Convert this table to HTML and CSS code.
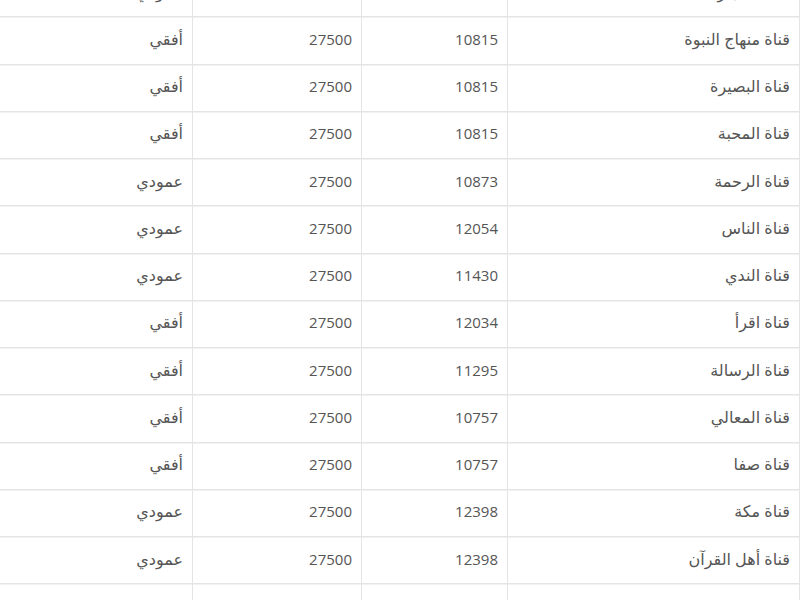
FILE: index.html
```html
<!DOCTYPE html>
<html lang="ar" dir="rtl">
<head>
<meta charset="utf-8">
<link rel="stylesheet" href="styles.css">
</head>
<body>
<div class="page">
<table class="channels">
<colgroup><col class="c-name"><col class="c-freq"><col class="c-sr"><col class="c-pol"></colgroup>
<tbody>
<tr><td class="ar">قناة الحجاز</td><td></td><td></td><td class="ar">عمودي</td></tr>
<tr><td class="ar">قناة منهاج النبوة</td><td>10815</td><td>27500</td><td class="ar">أفقي</td></tr>
<tr><td class="ar">قناة البصيرة</td><td>10815</td><td>27500</td><td class="ar">أفقي</td></tr>
<tr><td class="ar">قناة المحبة</td><td>10815</td><td>27500</td><td class="ar">أفقي</td></tr>
<tr><td class="ar">قناة الرحمة</td><td>10873</td><td>27500</td><td class="ar">عمودي</td></tr>
<tr><td class="ar">قناة الناس</td><td>12054</td><td>27500</td><td class="ar">عمودي</td></tr>
<tr><td class="ar">قناة الندي</td><td>11430</td><td>27500</td><td class="ar">عمودي</td></tr>
<tr><td class="ar">قناة اقرأ</td><td>12034</td><td>27500</td><td class="ar">أفقي</td></tr>
<tr><td class="ar">قناة الرسالة</td><td>11295</td><td>27500</td><td class="ar">أفقي</td></tr>
<tr><td class="ar">قناة المعالي</td><td>10757</td><td>27500</td><td class="ar">أفقي</td></tr>
<tr><td class="ar">قناة صفا</td><td>10757</td><td>27500</td><td class="ar">أفقي</td></tr>
<tr><td class="ar">قناة مكة</td><td>12398</td><td>27500</td><td class="ar">عمودي</td></tr>
<tr><td class="ar">قناة أهل القرآن</td><td>12398</td><td>27500</td><td class="ar">عمودي</td></tr>
<tr><td></td><td></td><td></td><td></td></tr>
</tbody>
</table>
</div>
</body>
</html>
```

FILE: styles.css
```css
html, body {
  margin: 0;
  padding: 0;
  background: #fff;
}
.page {
  width: 800px;
  overflow: hidden;
  height: 600px;
}
.channels {
  width: 800px;
  margin-top: -31px;
  border-collapse: collapse;
  table-layout: fixed;
  font-family: "Open Sans", "DejaVu Sans", sans-serif;
  font-size: 15px;
  color: #555;
}
.c-name { width: 292px; }
.c-freq { width: 146px; }
.c-sr { width: 169px; }
.c-pol { width: 193px; }
.channels td {
  border: 1px solid #e4e4e4;
  box-shadow: inset 0 1px 0 #f2f2f2;
  height: 47.25px;
  padding: 0 9px 3px;
  text-align: right;
  vertical-align: middle;
  line-height: 20px;
  box-sizing: border-box;
  white-space: nowrap;
}
.channels td.ar {
  font-size: 16px;
}
```
